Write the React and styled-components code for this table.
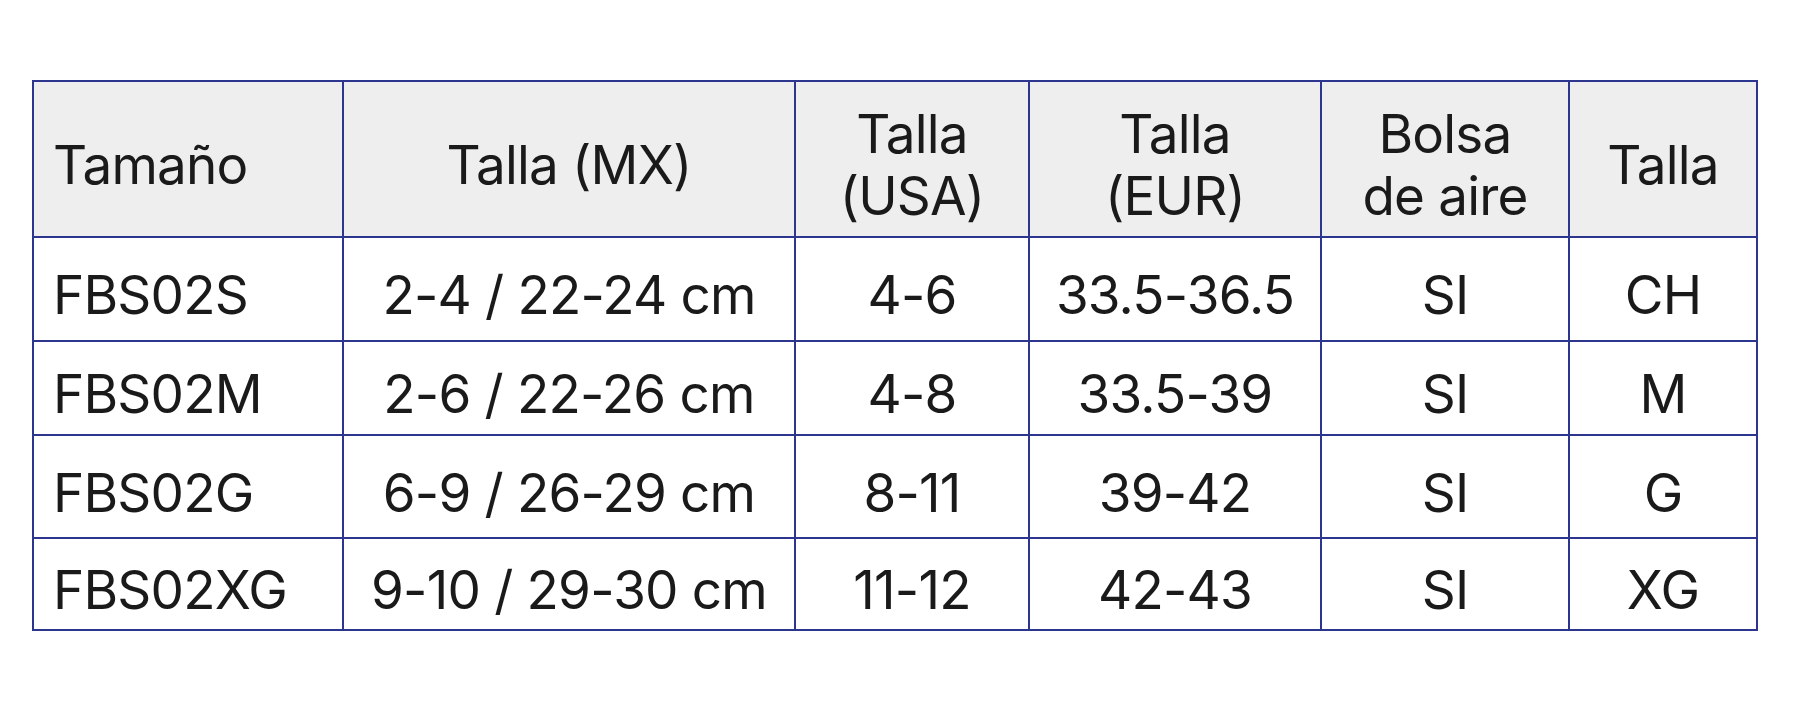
import React from 'react';
import styled, { createGlobalStyle } from 'styled-components';

const GlobalStyle = createGlobalStyle`
	body {
		margin: 0;
		background: #ffffff;
		font-family: Inter, 'Liberation Sans', sans-serif;
		color: #1a1a1a;
	}
`;

const Page = styled.div`
	padding: 80px 43px 81px 32px;
`;

const Grid = styled.div`
	display: grid;
	grid-template-columns: 308px 450px 232px 290px 246px 186px;
	grid-template-rows: 154px 102px 92px 101px 90px;
	gap: 2px;
	padding: 2px;
	background-color: #2c368f;
	width: max-content;
`;

const Cell = styled.div`
	background-color: ${(props) => (props.$head ? '#eeeeee' : '#ffffff')};
	display: flex;
	align-items: center;
	justify-content: ${(props) => (props.$left ? 'flex-start' : 'center')};
	text-align: ${(props) => (props.$left ? 'left' : 'center')};
	padding: ${(props) => (props.$left ? '12px 0 0 19px' : '12px 0 0 0')};
	font-size: 53px;
	line-height: 62px;
	letter-spacing: -0.8px;
	white-space: pre-line;
`;

const headers = [
	'Tamaño',
	'Talla (MX)',
	'Talla\n(USA)',
	'Talla\n(EUR)',
	'Bolsa\nde aire',
	'Talla',
];

const rows = [
	['FBS02S', '2-4 / 22-24 cm', '4-6', '33.5-36.5', 'SI', 'CH'],
	['FBS02M', '2-6 / 22-26 cm', '4-8', '33.5-39', 'SI', 'M'],
	['FBS02G', '6-9 / 26-29 cm', '8-11', '39-42', 'SI', 'G'],
	['FBS02XG', '9-10 / 29-30 cm', '11-12', '42-43', 'SI', 'XG'],
];

const App = () => {
	return (
		<Page>
			<GlobalStyle />
			<Grid>
				{headers.map((h, i) => (
					<Cell key={`h-${i}`} $head $left={i === 0}>
						{h}
					</Cell>
				))}
				{rows.map((row, r) =>
					row.map((value, i) => (
						<Cell key={`${r}-${i}`} $left={i === 0}>
							{value}
						</Cell>
					))
				)}
			</Grid>
		</Page>
	);
};

export default App;
